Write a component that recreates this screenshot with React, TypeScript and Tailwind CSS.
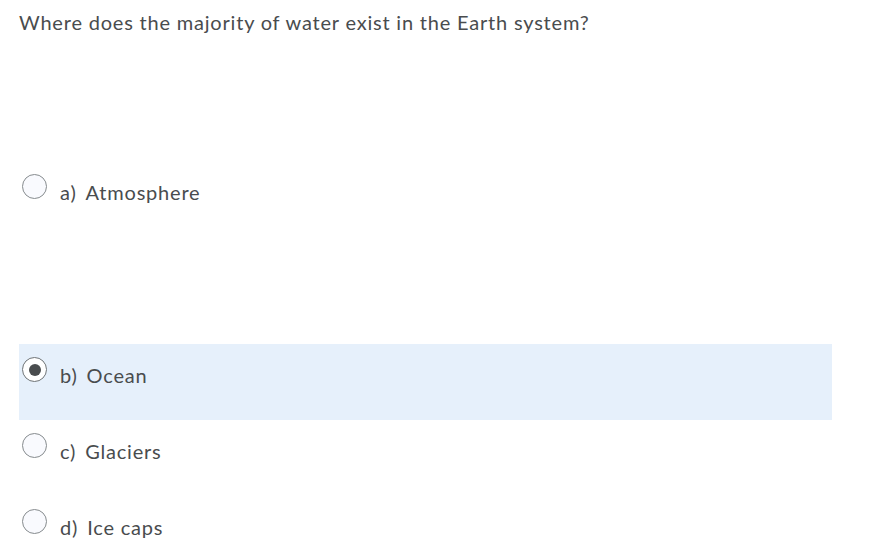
import React from 'react'

const options = [
  { key: 'a)', label: 'Atmosphere' },
  { key: 'b)', label: 'Ocean' },
  { key: 'c)', label: 'Glaciers' },
  { key: 'd)', label: 'Ice caps' },
]

function Radio({ checked }: { checked: boolean }) {
  return (
    <span
      className={`flex h-[25px] w-[25px] shrink-0 items-center justify-center rounded-full border ${
        checked ? 'border-[#6e7376] bg-white' : 'border-[#868b8e] bg-[#f9fafe]'
      }`}
    >
      {checked && <span className="h-[12px] w-[12px] rounded-full bg-[#494c4e]" />}
    </span>
  )
}

export default function App() {
  const selected = 1
  return (
    <div
      className="min-h-screen bg-white pl-[19px] pr-[50px] text-[#494c4e] tracking-[0.8px]"
      style={{ fontFamily: 'Lato, "Noto Sans", sans-serif' }}
    >
      <p className="pt-[8px] text-[20px] leading-[28px]">Where does the majority of water exist in the Earth system?</p>
      <div className="mt-[125px]">
        {options.map((o, i) => (
          <div
            key={o.key}
            className={`flex h-[76px] items-start gap-[13px] pl-[3px] pt-[13px] ${i === 1 ? 'mt-[107px]' : ''} ${
              i === selected ? 'bg-[#e6f0fb]' : ''
            }`}
          >
            <Radio checked={i === selected} />
            <span className="mt-[4px] text-[20px] leading-[28px]">
              <span className="mr-[9px]">{o.key}</span>
              {o.label}
            </span>
          </div>
        ))}
      </div>
    </div>
  )
}
